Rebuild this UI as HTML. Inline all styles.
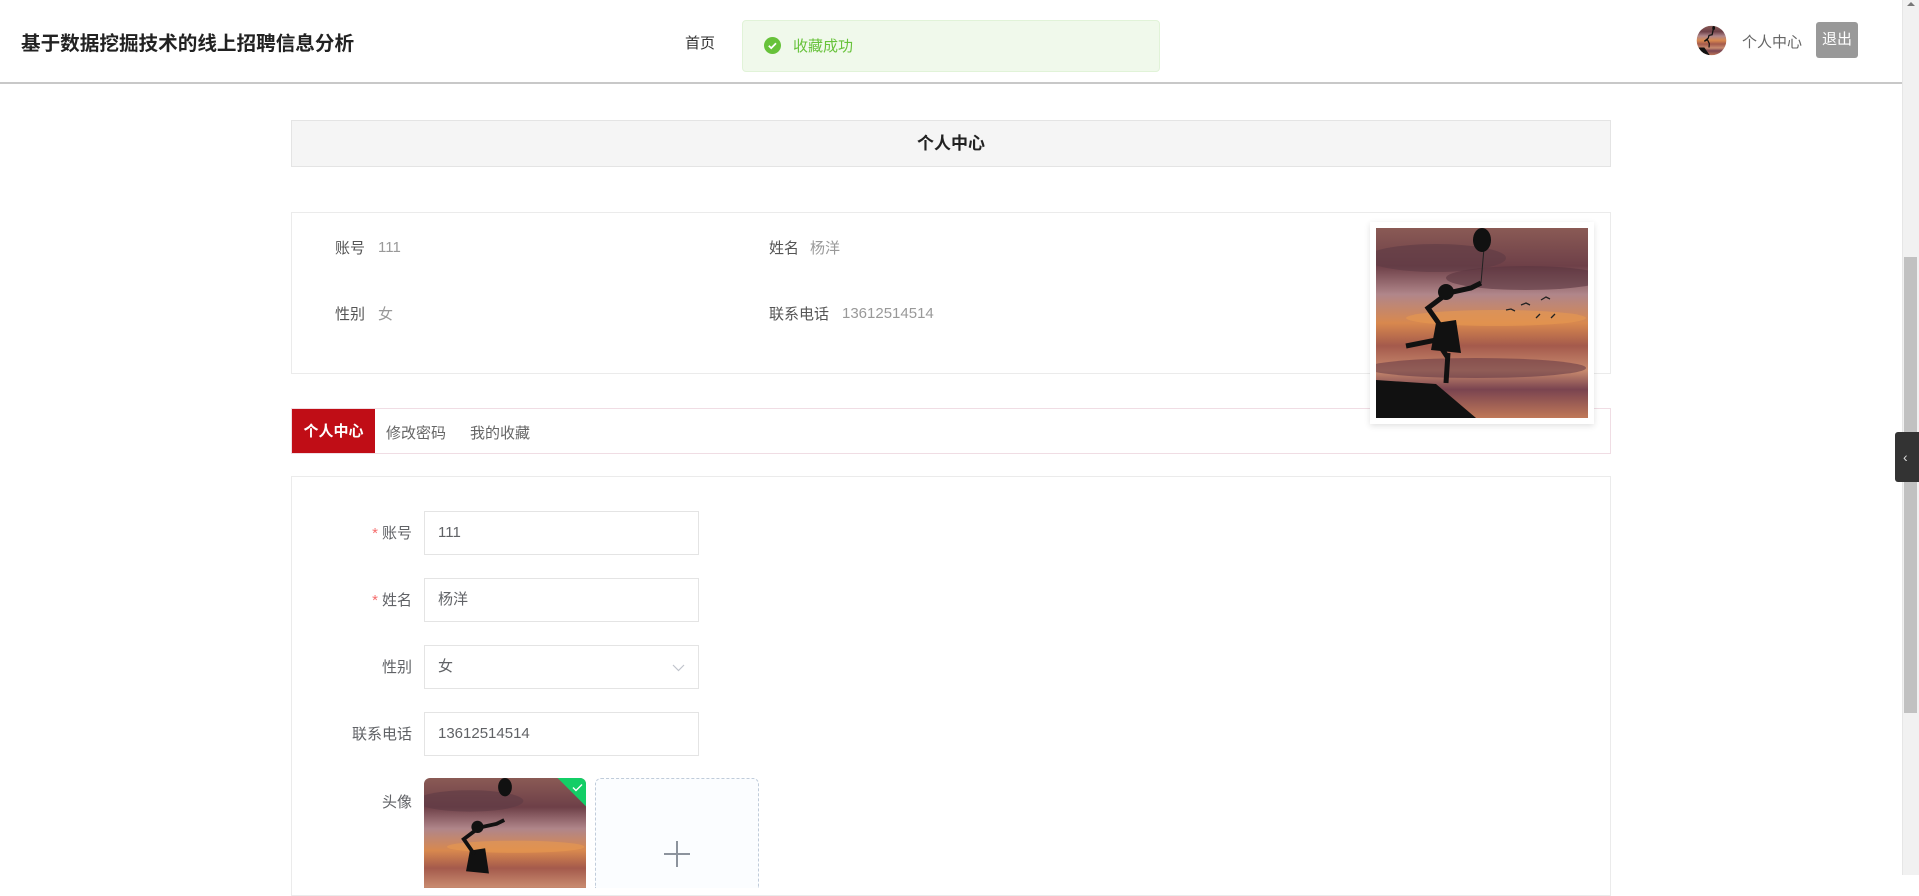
<!DOCTYPE html>
<html><head><meta charset="utf-8">
<style>
*{margin:0;padding:0;box-sizing:border-box}
body{width:1919px;height:875px;overflow:hidden;background:#fff;font-family:"Liberation Sans","Noto Sans CJK SC",sans-serif;color:#606266;position:relative}
.abs{position:absolute}
.header{left:0;top:0;width:1902px;height:84px;background:#fff;border-bottom:2px solid #c8c8c8}
.title{left:21px;top:27px;font-size:19.6px;font-weight:bold;color:#222}
.box{border:1px solid #ebebeb}
.lbl{font-size:15px;color:#555}
.val{font-size:15px;color:#999}
.inp{left:424px;width:275px;height:44px;border:1px solid #e4e4e4;font-size:15px;color:#606266;padding-left:13px;line-height:42px}
.fl{width:110px;left:302px;text-align:right;font-size:15px;color:#606266}
.fl b{color:#f56c6c;font-weight:normal;margin-right:4px}
</style></head><body>
<svg width="0" height="0" style="position:absolute">
<defs>
<linearGradient id="sky" x1="0" y1="0" x2="0" y2="1">
<stop offset="0" stop-color="#8a5a55"/><stop offset="0.2" stop-color="#6e4048"/><stop offset="0.35" stop-color="#b0868a"/><stop offset="0.5" stop-color="#d8884e"/><stop offset="0.62" stop-color="#a45a4c"/><stop offset="0.75" stop-color="#c88a6e"/><stop offset="0.85" stop-color="#7a4450"/><stop offset="1" stop-color="#c07858"/>
</linearGradient>
</defs>
</svg>

<div class="abs header"></div>
<div class="abs title">基于数据挖掘技术的线上招聘信息分析</div>
<div class="abs" style="left:685px;top:32px;font-size:15px;color:#333">首页</div>
<div class="abs" style="left:742px;top:20px;width:418px;height:52px;background:#f0f9eb;border:1px solid #e1f3d8;border-radius:4px"></div>
<svg class="abs" style="left:764px;top:37px" width="17" height="17" viewBox="0 0 16 16"><circle cx="8" cy="8" r="8" fill="#67c23a"/><path d="M4.5 8.2l2.3 2.3 4.5-4.6" stroke="#fff" stroke-width="1.6" fill="none"/></svg>
<div class="abs" style="left:793px;top:35px;font-size:15px;color:#67c23a">收藏成功</div>

<svg class="abs" style="left:1695px;top:24px" width="33" height="33" viewBox="0 0 212 190"><defs><clipPath id="cc"><circle cx="106" cy="95" r="95"/></clipPath></defs><g clip-path="url(#cc)"><rect width="212" height="190" fill="url(#sky)"/><path d="M0 140 L60 140 L95 190 L0 190Z" fill="#111"/><path d="M90 140 L92 115 L80 90 L60 100 L85 80 L90 62 L110 58 L118 20" stroke="#111" stroke-width="8" fill="none"/><ellipse cx="120" cy="15" rx="9" ry="13" fill="#111"/></g></svg>
<div class="abs" style="left:1742px;top:31px;font-size:15px;color:#666">个人中心</div>
<div class="abs" style="left:1816px;top:22px;width:42px;height:36px;background:#999;border-radius:3px;color:#fff;font-size:15px;text-align:center;line-height:36px">退出</div>

<div class="abs" style="left:1902px;top:0;width:17px;height:875px;background:#f1f1f1;border-left:1px solid #e6e6e6"></div>
<div class="abs" style="left:1904px;top:257px;width:13px;height:456px;background:#c1c1c1"></div>
<div class="abs" style="left:1907px;top:2px;width:0;height:0;border-left:4px solid transparent;border-right:4px solid transparent;border-bottom:4px solid #777"></div>
<div class="abs" style="left:1895px;top:432px;width:24px;height:50px;background:#333;border-radius:3px 0 0 3px;color:#ddd;font-size:14px;line-height:50px;padding-left:8px">‹</div>

<div class="abs box" style="left:291px;top:120px;width:1320px;height:47px;background:#f5f5f5;border-color:#e4e4e4;text-align:center;line-height:45px;font-size:17px;font-weight:bold;color:#222">个人中心</div>

<div class="abs box" style="left:291px;top:212px;width:1320px;height:162px"></div>
<div class="abs lbl" style="left:335px;top:237px">账号</div><div class="abs val" style="left:378px;top:239px">111</div>
<div class="abs lbl" style="left:769px;top:237px">姓名</div><div class="abs val" style="left:810px;top:237px">杨洋</div>
<div class="abs lbl" style="left:335px;top:303px">性别</div><div class="abs val" style="left:378px;top:303px">女</div>
<div class="abs lbl" style="left:769px;top:303px">联系电话</div><div class="abs val" style="left:842px;top:305px">13612514514</div>

<div class="abs" style="left:291px;top:408px;width:1320px;height:46px;border:1px solid #f0dde4;background:#fff"></div>
<div class="abs" style="left:292px;top:409px;width:83px;height:44px;background:#c00d16;color:#fff;font-weight:bold;font-size:15px;text-align:center;line-height:45px">个人中心</div>
<div class="abs" style="left:386px;top:422px;font-size:15px;color:#666">修改密码</div>
<div class="abs" style="left:470px;top:422px;font-size:15px;color:#666">我的收藏</div>

<div class="abs" style="left:1370px;top:222px;width:224px;height:202px;background:#fff;box-shadow:0 2px 6px rgba(0,0,0,.12)"></div>
<svg class="abs" style="left:1376px;top:228px" width="212" height="190" viewBox="0 0 212 190" preserveAspectRatio="none">
<rect width="212" height="190" fill="url(#sky)"/>
<ellipse cx="60" cy="30" rx="70" ry="14" fill="#5e3a44" opacity=".6"/>
<ellipse cx="150" cy="50" rx="80" ry="12" fill="#5a3540" opacity=".6"/>
<ellipse cx="120" cy="90" rx="90" ry="8" fill="#e89a50" opacity=".6"/>
<ellipse cx="100" cy="140" rx="110" ry="10" fill="#5a3040" opacity=".5"/>
<path d="M0 152 L60 156 L100 190 L0 190Z" fill="#111"/>
<path d="M70 155 L72 125 M72 130 L60 112 L30 118 M66 100 L52 80 L72 65 L95 60 L105 55" stroke="#111" stroke-width="5" fill="none"/>
<path d="M60 95 L80 92 L85 125 L55 122Z" fill="#111"/>
<circle cx="70" cy="64" r="8" fill="#111"/>
<path d="M105 55 L108 20" stroke="#222" stroke-width="1"/>
<ellipse cx="106" cy="12" rx="9" ry="12" fill="#111"/>
<path d="M145 77l5-2 4 2 M165 72l5-3 4 2 M160 90l4-4 M175 90l4-4 M130 82l5-1 4 2" stroke="#222" stroke-width="1.3" fill="none"/>
</svg>

<div class="abs box" style="left:291px;top:476px;width:1320px;height:420px"></div>
<div class="abs fl" style="top:522px"><b>*</b>账号</div><div class="abs inp" style="top:511px">111</div>
<div class="abs fl" style="top:589px"><b>*</b>姓名</div><div class="abs inp" style="top:578px">杨洋</div>
<div class="abs fl" style="top:656px">性别</div><div class="abs inp" style="top:645px">女</div>
<svg class="abs" style="left:672px;top:664px" width="13" height="8" viewBox="0 0 13 8"><path d="M1 1l5.5 5.5L12 1" stroke="#c0c4cc" stroke-width="1.2" fill="none"/></svg>
<div class="abs fl" style="top:723px">联系电话</div><div class="abs inp" style="top:712px">13612514514</div>
<div class="abs fl" style="top:791px">头像</div>
<div class="abs" style="left:424px;top:778px;width:162px;height:110px;border-radius:6px 6px 0 0;overflow:hidden">
<svg width="162" height="110" viewBox="0 0 212 190" preserveAspectRatio="xMidYMin slice" style="display:block">
<rect width="212" height="190" fill="url(#sky)"/>
<ellipse cx="60" cy="30" rx="70" ry="14" fill="#5e3a44" opacity=".6"/>
<ellipse cx="120" cy="90" rx="90" ry="8" fill="#e89a50" opacity=".6"/>
<path d="M60 95 L80 92 L85 125 L55 122Z" fill="#111"/>
<circle cx="70" cy="64" r="8" fill="#111"/>
<path d="M66 100 L52 80 L72 65 L95 60 L105 55" stroke="#111" stroke-width="5" fill="none"/>
<ellipse cx="106" cy="12" rx="9" ry="12" fill="#111"/>
</svg>
<div style="position:absolute;right:-20px;top:-8px;width:50px;height:26px;background:#13ce66;transform:rotate(45deg)"></div>
<svg style="position:absolute;right:3px;top:5px" width="11" height="9" viewBox="0 0 11 9"><path d="M1 4.5l3 3 6-6" stroke="#fff" stroke-width="1.4" fill="none"/></svg>
</div>
<div class="abs" style="left:595px;top:778px;width:164px;height:110px;border:1px dashed #c0ccda;border-bottom:none;border-radius:6px 6px 0 0;background:#fbfdff"></div>
<div class="abs" style="left:664px;top:853px;width:26px;height:2px;background:#8c939d"></div>
<div class="abs" style="left:676px;top:841px;width:2px;height:26px;background:#8c939d"></div>
</body></html>
